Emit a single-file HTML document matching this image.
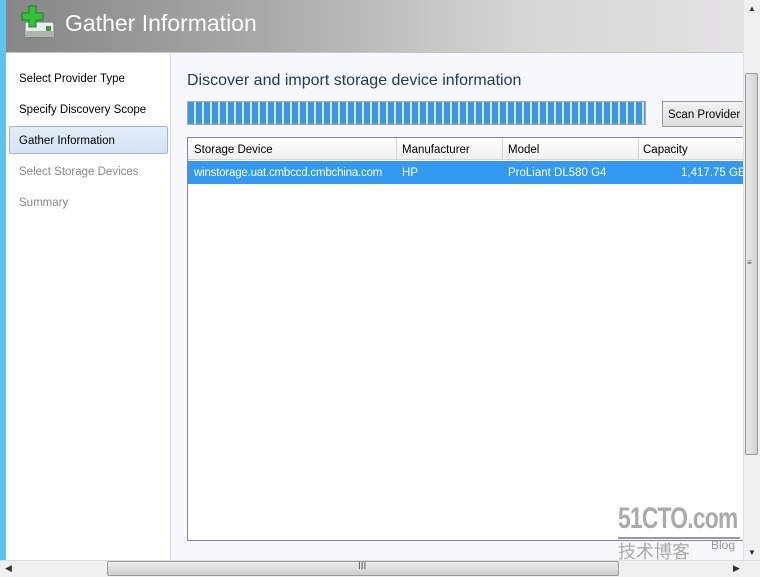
<!DOCTYPE html>
<html><head><style>
*{margin:0;padding:0;box-sizing:border-box}
body{width:760px;height:577px;overflow:hidden;position:relative;background:#fff;font-family:"Liberation Sans",sans-serif;font-size:11.5px;color:#000}
.a{position:absolute;white-space:nowrap}
</style></head><body>
<div class="a" style="left:0;top:0;width:6px;height:560px;background:#5cc3ea"></div>
<div class="a" style="left:6px;top:0;width:737px;height:53px;background:linear-gradient(90deg,#868686 0%,#a9a9a9 35%,#d6d6d6 70%,#e4e2e4 100%);border-bottom:1px solid #c8c8c8"></div>
<svg class="a" style="left:20px;top:4px" width="38" height="36" viewBox="0 0 38 36">
<rect x="5" y="18" width="29" height="15" rx="2" fill="#e9ece8" stroke="#777"/>
<rect x="5" y="27" width="29" height="6" fill="#b0b4ae"/>
<rect x="26" y="22" width="5" height="5" fill="#3a9a3a"/>
<path d="M9 2h7v7h7v7h-7v7H9v-7H2V9h7z" fill="#2fc33a" stroke="#1a7d22"/>
</svg>
<div class="a" style="left:65px;top:10px;font-size:23px;color:#fff">Gather Information</div>
<div class="a" style="left:6px;top:53px;width:165px;height:507px;background:#fff;border-right:1px solid #dcdcdc"></div>
<div class="a" style="left:19px;top:73px">Select Provider Type</div>
<div class="a" style="left:19px;top:104px">Specify Discovery Scope</div>
<div class="a" style="left:9px;top:126px;width:159px;height:28px;background:linear-gradient(#e4edf9,#d3e2f6);border:1px solid #9fb6d6;border-radius:2px"></div>
<div class="a" style="left:19px;top:135px">Gather Information</div>
<div class="a" style="left:19px;top:166px;color:#888">Select Storage Devices</div>
<div class="a" style="left:19px;top:197px;color:#888">Summary</div>
<div class="a" style="left:171px;top:53px;width:572px;height:507px;background:#f6f8fd"></div>
<div class="a" style="left:187px;top:72px;font-size:16px;color:#1e395b">Discover and import storage device information</div>
<div class="a" style="left:187px;top:101px;width:459px;height:24px;border:1px solid #aaa;background:repeating-linear-gradient(90deg,#3c97dc 0 6px,#cfe4f4 6px 8px)"></div>
<div class="a" style="left:662px;top:101px;width:82px;height:26px;background:linear-gradient(#f2f2f2,#dedede);border:1px solid #999;padding:7px 0 0 5px">Scan Provider</div>
<div class="a" style="left:187px;top:137px;width:557px;height:404px;background:#fff;border:1px solid #82878d"></div>
<div class="a" style="left:188px;top:138px;width:556px;height:22px;background:linear-gradient(#fff,#f0f0f0);border-bottom:1px solid #d5d5d5"></div>
<div class="a" style="left:396px;top:138px;width:1px;height:22px;background:#d5d5d5"></div>
<div class="a" style="left:502px;top:138px;width:1px;height:22px;background:#d5d5d5"></div>
<div class="a" style="left:638px;top:138px;width:1px;height:22px;background:#d5d5d5"></div>
<div class="a" style="left:194px;top:144px">Storage Device</div>
<div class="a" style="left:402px;top:144px">Manufacturer</div>
<div class="a" style="left:508px;top:144px">Model</div>
<div class="a" style="left:643px;top:144px">Capacity</div>
<div class="a" style="left:188px;top:161px;width:556px;height:23px;background:#3399f0"></div>
<div class="a" style="left:194px;top:167px;color:#fff;letter-spacing:-0.2px">winstorage.uat.cmbccd.cmbchina.com</div>
<div class="a" style="left:402px;top:167px;color:#fff">HP</div>
<div class="a" style="left:508px;top:167px;color:#fff">ProLiant DL580 G4</div>
<div class="a" style="left:681px;top:167px;color:#fff">1,417.75 GB</div>
<div class="a" style="left:743px;top:0;width:17px;height:560px;background:#f0f0f0;border-left:1px solid #e0e0e0"></div>
<div class="a" style="left:748px;top:4px;font-size:8px;color:#333">▲</div>
<div class="a" style="left:745px;top:73px;width:13px;height:382px;background:linear-gradient(90deg,#e8e8e8,#d4d4d4);border:1px solid #999;border-radius:2px"></div>
<div class="a" style="left:747px;top:258px;font-size:8px;color:#555">≡</div>
<div class="a" style="left:748px;top:548px;font-size:8px;color:#333">▼</div>
<div class="a" style="left:0;top:560px;width:760px;height:17px;background:#f0f0f0;border-top:1px solid #ddd"></div>
<div class="a" style="left:5px;top:563px;font-size:9px;color:#333">◀</div>
<div class="a" style="left:107px;top:561px;width:512px;height:15px;background:linear-gradient(#ececec,#cfcfcf);border:1px solid #999;border-radius:2px"></div>
<div class="a" style="left:358px;top:561px;font-size:10px;color:#555">III</div>
<div class="a" style="left:733px;top:563px;font-size:9px;color:#333">▶</div>
<div class="a" style="left:618px;top:502px;font-size:30px;font-weight:bold;color:#aaa;letter-spacing:-1px;transform:scaleX(.76);transform-origin:left">51CTO.com</div>
<div class="a" style="left:618px;top:537px;width:122px;height:2px;background:#999"></div>
<div class="a" style="left:618px;top:538px;font-size:18px;color:#aaa;font-family:'Noto Sans CJK SC',sans-serif">技术博客</div>
<div class="a" style="left:711px;top:538px;font-size:12px;color:#999">Blog</div>
</body></html>
